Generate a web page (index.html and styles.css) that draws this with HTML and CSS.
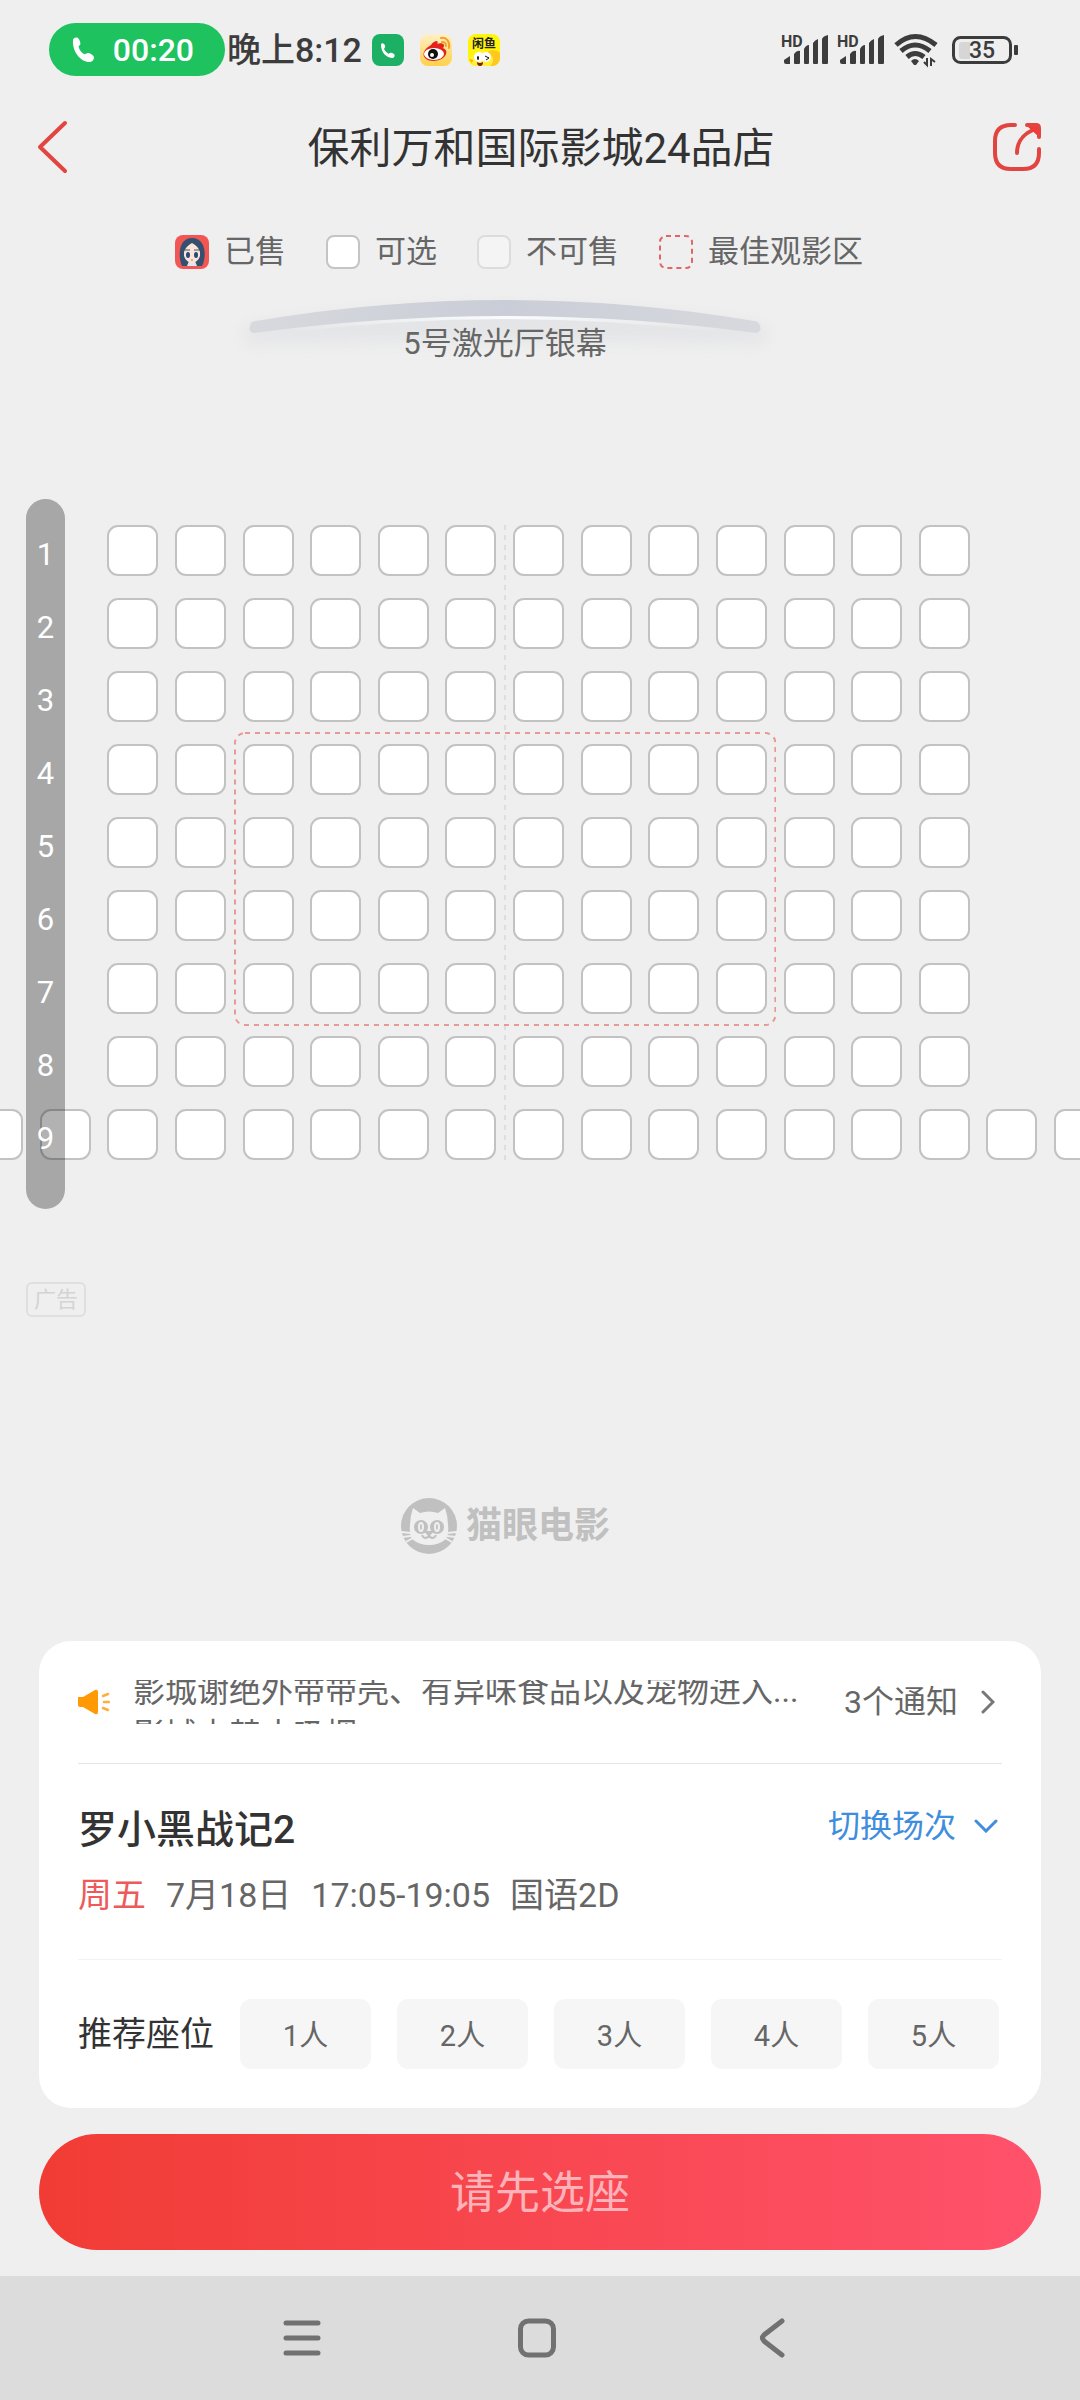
FILE: index.html
```html
<!DOCTYPE html>
<html lang="zh-CN">
<head>
<meta charset="utf-8">
<meta name="viewport" content="width=device-width">
<title>保利万和国际影城24品店</title>
<link rel="stylesheet" href="styles.css">
</head>
<body>
<div class="status">
  <div class="call-pill">
    <svg width="22" height="26" viewBox="0 0 22 26"><path d="M1 3C1 1 4 0 6 1c2 2 3 6 2 7-1 1-2 1-1 3 1 3 3 5 5 6 1 1 2-1 4-1s5 2 6 4c0 3-2 5-5 5C10 25 0 16 1 3Z" fill="#fff"/></svg>
    <span>00:20</span>
  </div>
  <span class="clock">晚上8:12</span>
  <div class="apps">
    <svg width="32" height="32" viewBox="0 0 32 32"><rect width="32" height="32" rx="8" fill="#1bb063"/><path d="M9 11c0-2 2-2 3-1 2 2 1 4 0 5 1 2 3 4 5 5 1-2 3-1 5 0 1 1 1 3-1 4C14 24 9 18 9 11Z" fill="#fff"/></svg>
    <svg width="32" height="32" viewBox="0 0 32 32"><defs><linearGradient id="wb" x2="0" y2="1"><stop stop-color="#fff0c8"/><stop offset="1" stop-color="#ffd04a"/></linearGradient></defs><rect width="32" height="32" rx="8" fill="url(#wb)"/><path d="M11 11c2-3 4-4 6-4 1 1 1 2 0 3 3-1 6-1 7 1 0 1 0 2-1 3 5 2 4 7 0 10-5 4-15 4-18 0-4-5 1-10 6-13Z" fill="#e32219"/><ellipse cx="14" cy="20" rx="10" ry="6" fill="#fff"/><circle cx="13" cy="20" r="5" fill="#111"/><circle cx="12" cy="21" r="2" fill="#fff"/><path d="M21 4c6-1 9 4 8 10M22 8c3 0 4 2 4 4" fill="none" stroke="#f5a02a" stroke-width="2" stroke-linecap="round"/></svg>
    <svg width="32" height="32" viewBox="0 0 32 32"><defs><clipPath id="xy"><rect width="32" height="32" rx="8"/></clipPath></defs><g clip-path="url(#xy)"><rect width="32" height="32" fill="#fff40c"/><circle cx="25" cy="26" r="10" fill="#ffc81f"/><ellipse cx="14" cy="26" rx="11" ry="9" fill="#fff03a"/><path d="M1 25l4 1-1 3Z" fill="#ffa800"/><circle cx="11" cy="23" r="5" fill="#fff"/><circle cx="18" cy="23" r="5" fill="#fff"/><ellipse cx="10" cy="24" rx="1" ry="2" fill="#111"/><path d="M17 22l4 2-3 2" fill="none" stroke="#111" stroke-width="1"/><path d="M9 28q3 2 6 0 0 4-3 4t-3-4Z" fill="#7a1c0c"/><text x="16" y="14" text-anchor="middle" class="tiny">闲鱼</text></g></svg>
  </div>
  <div class="signals">
    <svg width="46" height="32" viewBox="0 0 46 32"><text x="-1" y="13" class="hd">HD</text><path d="M2 28v-2l6-4v8H4q-2 0-2-2ZM12 29V20q3-4 6-3v12q0 1-1 1h-4q-1 0-1-1ZM22 29V15q2-4 5-4v18q0 1-1 1h-3q-1 0-1-1ZM31 29V9q2-3 5-4v24q0 1-1 1h-3q-1 0-1-1ZM40 29V5q1-3 6-4v28q0 1-1 1h-4q-1 0-1-1Z" fill="#3c3c3c"/></svg>
    <svg width="46" height="32" viewBox="0 0 46 32"><text x="-1" y="13" class="hd">HD</text><path d="M2 28v-2l6-4v8H4q-2 0-2-2ZM12 29V20q3-4 6-3v12q0 1-1 1h-4q-1 0-1-1ZM22 29V15q2-4 5-4v18q0 1-1 1h-3q-1 0-1-1ZM31 29V9q2-3 5-4v24q0 1-1 1h-3q-1 0-1-1ZM40 29V5q1-3 6-4v28q0 1-1 1h-4q-1 0-1-1Z" fill="#3c3c3c"/></svg>
    <svg width="44" height="34" viewBox="0 0 44 34"><g fill="none" stroke="#3c3c3c" stroke-width="5"><path d="M2 12q19-17 40 0M7 18q14-12 29 0M13 24q8-7 17 0"/></g><path d="M17 28q4-4 8 0l-3 4h-2Z" fill="#3c3c3c"/><path d="M30 29l3 3v-7M37 33v-7l4 3" stroke="#3c3c3c" stroke-width="2" fill="none"/></svg>
    <svg width="66" height="28" viewBox="0 0 66 28"><rect x="1.500" y="1.500" width="57" height="25" rx="7" fill="none" stroke="#3c3c3c" stroke-width="3"/><path d="M10 6h8v17h-8q-3 0-3-3V9q0-3 3-3Z" fill="#d6d6d6"/><rect x="62" y="9" width="4" height="10" rx="1" fill="#3c3c3c"/><text x="30" y="22" text-anchor="middle" class="pct">35</text></svg>
  </div>
</div>

<header class="header">
  <button class="icon-btn" aria-label="返回"><svg width="32" height="56" viewBox="0 0 32 56"><path d="M29 4 4 28l25 24" fill="none" stroke="#e2453f" stroke-width="4" stroke-linecap="round" stroke-linejoin="round"/></svg></button>
  <h1>保利万和国际影城24品店</h1>
  <button class="icon-btn" aria-label="分享"><svg width="48" height="48" viewBox="0 0 48 48"><g fill="none" stroke="#e2453f" stroke-width="4" stroke-linecap="round"><path d="M22 2h-4Q2 2 2 18v12q0 16 16 16h12q16 0 16-16v-4"/><path d="M34 2h9q3 0 3 3v9"/><path d="M24 30C24 18 30 11 42 6"/></g><path d="M35 4h10v9Z" fill="#ee3d38"/></svg></button>
</header>

<main class="main">
  <ul class="legend">
    <li><svg width="34" height="34" viewBox="0 0 34 34"><rect width="34" height="34" rx="8" fill="#f15654"/><path d="M7 31C3 22 3 3 17 3s15 19 10 28Z" fill="#35506e"/><path d="M12 31h10l-2-5h-6Z" fill="#dfe6ef"/><path d="M9 17q2-6 8-9 6 3 8 9v4q-2 6-8 7-6-1-8-7Z" fill="#fbe4d8"/><ellipse cx="13" cy="20" rx="2" ry="3" fill="#274a78"/><ellipse cx="21" cy="20" rx="2" ry="3" fill="#274a78"/><path d="M10 15h5M19 15h5" stroke="#44576e"/><path d="M16 25h2" stroke="#d8605a"/></svg>已售</li>
    <li><i class="swatch"></i>可选</li>
    <li><i class="swatch off"></i>不可售</li>
    <li><svg width="34" height="34" viewBox="0 0 34 34"><rect x="1" y="1" width="32" height="32" rx="6" fill="none" stroke="#e06663" stroke-width="2" stroke-dasharray="5 4"/></svg>最佳观影区</li>
  </ul>

  <div class="screen">
    <svg class="arc" viewBox="0 0 550 70" aria-hidden="true">
      <defs>
        <linearGradient id="arc"><stop stop-color="#d8d9de"/><stop offset=".5" stop-color="#cacdd7"/><stop offset="1" stop-color="#d8d9de"/></linearGradient>
        <linearGradient id="glow"><stop stop-color="#fafbfd" stop-opacity="0"/><stop offset=".5" stop-color="#fafbfd"/><stop offset="1" stop-color="#fafbfd" stop-opacity="0"/></linearGradient>
        <filter id="soft" x="-20%" y="-50%" width="140%" height="200%"><feGaussianBlur stdDeviation="8"/></filter>
      </defs>
      <path d="M14 36Q275-4 536 36V54Q275 50 14 54Z" fill="#e0e1e4" opacity=".7" filter="url(#soft)"/>
      <path d="M60 40Q275 14 490 40" fill="none" stroke="url(#glow)" stroke-width="4"/>
      <path d="M24 43Q275 9 526 43Q532 42 530 36Q529 31 524 31Q275-11 26 31Q21 31 20 36Q18 42 24 43Z" fill="url(#arc)"/>
    </svg>
    <p>5号激光厅银幕</p>
  </div>

  <section class="map" aria-label="座位图">
    <div class="seats" id="seats">
      <i class="aisle"></i>
      <svg class="zone" aria-hidden="true"><rect x="1" y="1" rx="10" fill="none" stroke="#e89895" stroke-width="2" stroke-dasharray="5 5"/></svg>
    </div>
    <ol class="rows"><li>1</li><li>2</li><li>3</li><li>4</li><li>5</li><li>6</li><li>7</li><li>8</li><li>9</li></ol>
  </section>

  <span class="ad">广告</span>

  <div class="brand">
    <svg width="56" height="56" viewBox="0 0 56 56"><circle cx="28" cy="28" r="28" fill="#c0c0c0"/><path d="M12 10l7 5q9-3 18 0l7-5q3 8 3 17 1 9-2 14-7 6-17 6t-17-6q-3-5-2-14 0-9 3-17Z" fill="#efefef"/><path d="M0 34l10 1M1 39l9-1M5 44l7-4M56 34l-10 1M55 39l-9-1M51 44l-7-4" stroke="#efefef" stroke-width="2"/><circle cx="20" cy="29" r="7" fill="#c0c0c0"/><circle cx="36" cy="29" r="7" fill="#c0c0c0"/><g fill="none" stroke="#efefef" stroke-width="2"><ellipse cx="20" cy="29" rx="2" ry="4"/><ellipse cx="36" cy="29" rx="2" ry="4"/></g><path d="M25 34h6l-3 3ZM21 37q1 3 4 3 3-1 3-4 0 3 3 4 3 0 4-3" fill="none" stroke="#c0c0c0" stroke-width="2"/></svg>
    <span>猫眼电影</span>
  </div>
</main>

<section class="card">
  <div class="notice">
    <svg class="horn" width="32" height="26" viewBox="0 0 32 26"><path d="M0 8h5L17 1q3-1 3 2v20q0 3-3 2L5 18H2q-2 0-2-2Z" fill="#ff9a05"/><path d="M25 7l5-2M26 13h5M25 19l5 2" stroke="#ffae3d" stroke-width="2.500" stroke-linecap="round"/></svg>
    <div class="ticker"><ul><li>影城谢绝外带带壳、有异味食品以及宠物进入...</li><li>影城内禁止吸烟</li></ul></div>
    <a class="more" href="#notices">3个通知<svg width="14" height="24" viewBox="0 0 14 24"><path d="M2 2l10 10L2 22" fill="none" stroke="#777" stroke-width="3" stroke-linecap="round"/></svg></a>
  </div>
  <div class="show">
    <div class="show-head">
      <h2>罗小黑战记2</h2>
      <button class="switch">切换场次<svg width="24" height="14" viewBox="0 0 24 14"><path d="M2 2l10 10L22 2" fill="none" stroke="#3f8ddd" stroke-width="3" stroke-linecap="round"/></svg></button>
    </div>
    <p class="meta"><strong>周五</strong><span>7月18日</span><span>17:05-19:05</span><span>国语2D</span></p>
  </div>
  <div class="pick">
    <span>推荐座位</span>
    <button>1人</button><button>2人</button><button>3人</button><button>4人</button><button>5人</button>
  </div>
</section>

<button class="cta">请先选座</button>

<nav class="sysnav">
  <button aria-label="最近任务"><svg width="38" height="40" viewBox="0 0 38 40"><path d="M3 5h32M3 20h32M3 35h32" stroke="#717171" stroke-width="5" stroke-linecap="round"/></svg></button>
  <button aria-label="主屏幕"><svg width="38" height="40" viewBox="0 0 38 40"><rect x="2.500" y="3" width="33" height="34" rx="8" fill="none" stroke="#717171" stroke-width="5"/></svg></button>
  <button aria-label="返回"><svg width="26" height="40" viewBox="0 0 26 40"><path d="M23 3 5 17q-3 3 0 6l18 14" fill="none" stroke="#717171" stroke-width="5" stroke-linecap="round"/></svg></button>
</nav>
<script src="seats.js"></script>
</body>
</html>
```
FILE: styles.css
```css
* { box-sizing: border-box; }
body {
  margin: 0;
  min-height: 100vh;
  display: flex;
  flex-direction: column;
  background: #efefef;
  color: #666;
  font-family: Roboto, "Noto Sans CJK SC", sans-serif;
  font-size: 31px;
  overflow-x: hidden;
}
h1, h2, p, ul, ol { margin: 0; padding: 0; font-weight: 400; }
ul, ol { list-style: none; }
button { border: 0; padding: 0; margin: 0; background: none; font: inherit; color: inherit; cursor: pointer; }
a { color: inherit; text-decoration: none; }
svg { display: block; flex: none; }

/* phone status bar */
.status { display: flex; align-items: center; height: 99px; padding: 0 62px 0 49px; color: #3c3c3c; }
.call-pill { display: flex; align-items: center; justify-content: space-between; width: 176px; height: 53px; padding: 0 31px 0 23px; border-radius: 27px; background: #1ec360; color: #fff; font-size: 32px; font-weight: 500; }
.clock { margin-left: 2px; font-size: 34px; font-weight: 500; line-height: 40px; white-space: nowrap; }
.apps { display: flex; gap: 16px; margin-left: 10px; }
.signals { display: flex; align-items: center; gap: 10px; margin-left: auto; }
.signals svg { overflow: visible; }
.signals svg:last-child { margin-left: 4px; }
.tiny { font-size: 12px; font-weight: 700; fill: #222; }
.hd { font-size: 16px; font-weight: 700; fill: #3c3c3c; }
.pct { font-size: 23px; font-weight: 500; fill: #3c3c3c; }

/* title bar */
.header { display: flex; align-items: center; justify-content: space-between; height: 96px; padding: 0 39px 0 36px; }
.header h1 { flex: 1; padding: 3px 0 0 5px; color: #333; font-size: 42px; line-height: 60px; text-align: center; }
.icon-btn { display: flex; width: 48px; }

.main { display: flex; flex-direction: column; flex: 1; }
.legend { display: flex; justify-content: center; gap: 40px; margin-top: 40px; padding-right: 42px; line-height: 34px; }
.legend li { display: flex; align-items: center; gap: 15px; }
.swatch { width: 34px; height: 34px; border: 2px solid #c4c4c4; border-radius: 8px; background: #fff; }
.swatch.off { border-color: #dcdcdc; background: #f4f4f4; }

.screen { display: grid; grid-template-rows: 70px; justify-items: center; align-items: end; margin-top: 21px; padding-right: 70px; }
.screen > * { grid-area: 1 / 1; }
.arc { width: 550px; height: 70px; overflow: visible; }
.screen p { position: relative; line-height: 32px; }

/* seat map */
.map { position: relative; margin-top: 139px; padding: 26px 0 49px; overflow: hidden; }
.seats { display: grid; grid-template-columns: repeat(17, 51px); grid-template-rows: repeat(9, 51px); row-gap: 22px; justify-content: space-between; margin: 0 -25px 0 -28px; }
.seat { appearance: none; width: 51px; height: 51px; margin: 0; border: 2px solid #c2c2c2; border-radius: 11px; background: #fff; }
.seat:checked { background: #f15654; }
.aisle { grid-area: 1 / 8 / -1 / 10; justify-self: center; width: 2px; background: repeating-linear-gradient(#dedede 0 5px, transparent 5px 10px); }
.zone { grid-area: 4 / 5 / 8 / 13; width: calc(100% + 18px); height: calc(100% + 24px); margin: -12px -9px; pointer-events: none; }
.zone rect { width: calc(100% - 2px); height: calc(100% - 2px); }
.rows { position: absolute; left: 26px; top: 0; bottom: 0; width: 39px; padding-top: 19px; border-radius: 20px; background: rgba(0, 0, 0, .3); color: #fff; text-align: center; line-height: 73px; pointer-events: none; }

.ad { align-self: flex-start; margin: 73px 0 0 26px; padding: 0 6px; border: 2px solid #dfdfdf; border-radius: 6px; color: #d4d4d4; font-size: 22px; line-height: 31px; }
.brand { display: flex; align-items: center; justify-content: center; gap: 9px; margin-top: 181px; padding-right: 69px; color: #c0c0c0; font-size: 36px; font-weight: 700; line-height: 56px; }

/* session card */
.card { margin: 0 39px; padding: 0 39px; border-radius: 32px; background: #fff; }
.notice { display: flex; align-items: center; height: 123px; border-bottom: 1px solid #e5e5e5; font-size: 32px; }
.ticker { flex: 1; height: 44px; margin-left: 23px; overflow: hidden; line-height: 44px; white-space: nowrap; }
.ticker ul { margin-top: -11px; }
.more { display: flex; align-items: center; gap: 23px; padding-right: 7px; line-height: 44px; }
.show { height: 196px; padding-top: 36px; border-bottom: 1px solid #f2f2f2; }
.show-head { display: flex; justify-content: space-between; align-items: flex-start; }
.show h2 { color: #333; font-size: 39px; font-weight: 500; line-height: 60px; }
.switch { display: flex; align-items: center; gap: 18px; padding-right: 4px; color: #3f8ddd; font-size: 32px; line-height: 52px; }
.meta { display: flex; gap: 20px; margin-top: 10px; font-size: 34px; line-height: 50px; }
.meta strong { color: #ec5b59; font-weight: 400; }
.pick { display: flex; align-items: center; justify-content: space-between; height: 148px; padding-right: 3px; }
.pick span { color: #333; font-size: 34px; line-height: 50px; }
.pick button { width: 131px; height: 70px; padding-bottom: 3px; border-radius: 11px; background: #f6f6f6; font-size: 29px; }

.cta { height: 116px; margin: 26px 39px; padding-bottom: 5px; border-radius: 58px; background: linear-gradient(90deg, #f13c35, #ff526b); color: #ffb3b9; font-size: 45px; }

.sysnav { display: flex; justify-content: center; height: 124px; padding-right: 6px; background: #dcdcdc; }
.sysnav button { display: grid; place-items: center; width: 235px; }
```
FILE: seats.js
```js
// Rows 1-8 hold 13 seats in the middle columns; row 9 spans all 17 columns.
const grid = document.getElementById("seats");
const zone = grid.querySelector(".zone");
for (let row = 1; row <= 9; row++) {
  const first = row === 9 ? 1 : 3;
  const last = row === 9 ? 17 : 15;
  for (let col = first; col <= last; col++) {
    const seat = document.createElement("input");
    seat.type = "checkbox";
    seat.className = "seat";
    seat.setAttribute("aria-label", `${row}排${col - first + 1}座`);
    seat.style.gridArea = `${row} / ${col}`;
    grid.insertBefore(seat, zone);
  }
}
```
